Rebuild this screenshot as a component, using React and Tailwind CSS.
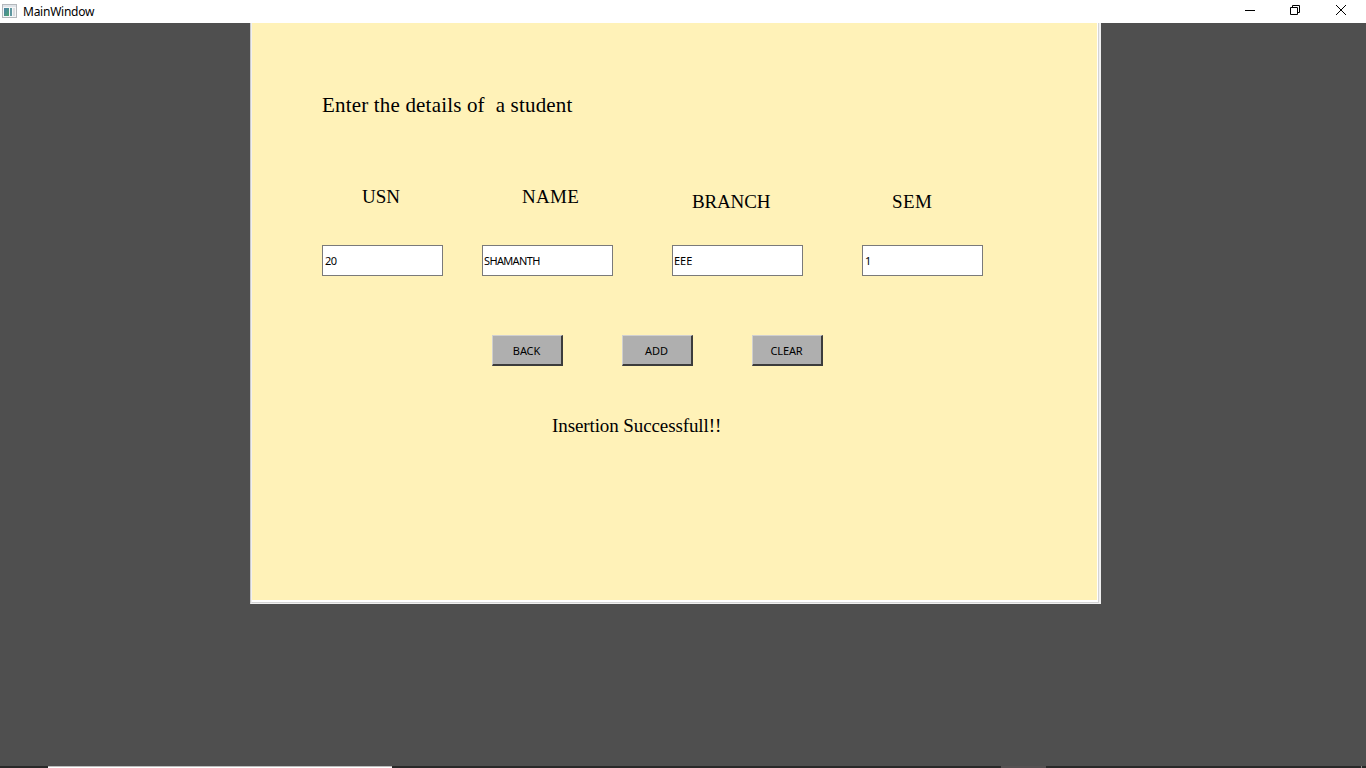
import React from "react";

const serif = "font-['Liberation_Serif',serif] text-black whitespace-pre";
const field =
  "h-[31px] border border-[#7a7a7a] bg-white text-[11px] leading-[29px] text-black outline-none font-['Noto_Sans',sans-serif]";
const button =
  "h-[31px] w-[71px] border-t border-l border-r-2 border-b-2 border-t-[#d0d0d0] border-l-[#d0d0d0] border-r-[#3c3c3c] border-b-[#3c3c3c] bg-[#afafaf] pr-px text-center text-[11px] leading-[29px] tracking-[-0.1px] text-black font-['Noto_Sans',sans-serif]";

function TitleBar() {
  return (
    <header className="flex h-[23px] shrink-0 items-center bg-white">
      <svg className="mb-px ml-[2px] shrink-0" width="16" height="14" viewBox="0 0 16 14" shapeRendering="crispEdges">
        <defs>
          <linearGradient id="pane" x1="0" y1="0" x2="1" y2="1">
            <stop offset="0" stopColor="#4a7fa8" />
            <stop offset="1" stopColor="#4fa572" />
          </linearGradient>
        </defs>
        <rect width="15" height="14" fill="#b4b8bc" />
        <rect x="1" y="1" width="13" height="2" fill="#dfe3e8" />
        <rect x="1" y="3" width="13" height="10" fill="#f5f6f7" />
        <rect x="2" y="4" width="5" height="8" fill="url(#pane)" />
        <rect x="8" y="4" width="2" height="8" fill="#5f97a0" />
        <rect x="11" y="4" width="2" height="8" fill="#dadde0" />
      </svg>
      <span className="ml-[5px] pt-px font-['Noto_Sans',sans-serif] text-[12px] leading-[22px] tracking-[-0.25px] text-black">MainWindow</span>
      <svg className="ml-auto mr-[19px]" width="102" height="23" viewBox="0 0 102 23" fill="none" stroke="#000">
        <path d="M0 10.5h10" />
        <path d="M45.5 7.5h7v7h-7zM47.5 7.5v-2h7v7h-2" />
        <path d="M91 5l10 10M101 5l-10 10" />
      </svg>
    </header>
  );
}

export default function App() {
  return (
    <div className="flex h-[768px] w-[1366px] flex-col overflow-hidden bg-[#4f4f4f]">
      <TitleBar />
      <main className="flex-1">
        <div className="ml-[250px] h-[581px] w-[851px] border-r-2 border-b border-l border-[#f0f0f0] border-l-[#c8c8c8]">
          <div className="h-[580px] border-r border-b border-l border-r-[#d4d4d4] border-b-[#d4d4d4] border-l-[#f0f0f0]">
            <div className="flex h-[579px] flex-col border-r border-b-2 border-white bg-[#fff2b8] pl-[70px]">
              <h1 className={`mt-[68px] h-[28px] text-[21px] leading-[28px] tracking-[0.18px] ${serif}`}>{"Enter the details of  a student"}</h1>
              <div className="mt-[61px] flex h-[45px] pl-[40px]">
                <span className={`w-[160px] pt-[5px] text-[19px] leading-[24px] ${serif}`}>USN</span>
                <span className={`w-[170px] pt-[5px] text-[19px] leading-[24px] tracking-[0.3px] ${serif}`}>NAME</span>
                <span className={`w-[200px] pt-[10px] text-[19px] leading-[24px] tracking-[-0.15px] ${serif}`}>BRANCH</span>
                <span className={`pt-[10px] text-[19px] leading-[24px] tracking-[0.4px] ${serif}`}>SEM</span>
              </div>
              <div className="mt-[20px] flex">
                <input className={`mr-[39px] w-[121px] pl-[2px] tracking-[-0.5px] ${field}`} defaultValue="20" />
                <input className={`mr-[59px] w-[131px] pl-px tracking-[-0.65px] ${field}`} defaultValue="SHAMANTH" />
                <input className={`mr-[59px] w-[131px] pl-px ${field}`} defaultValue="EEE" />
                <input className={`w-[121px] pl-[2px] ${field}`} defaultValue="1" />
              </div>
              <div className="mt-[59px] flex gap-[59px] pl-[170px]">
                <button className={button}>BACK</button>
                <button className={button}>ADD</button>
                <button className={button}>CLEAR</button>
              </div>
              <p className={`mt-[48px] pl-[230px] text-[19px] leading-[24px] tracking-[-0.1px] ${serif}`}>Insertion Successfull!!</p>
            </div>
          </div>
        </div>
      </main>
      <footer className="flex h-[2px] shrink-0 bg-[#292929]">
        <div className="ml-[48px] w-[344px] border-t border-[#bdbdbd] bg-white" />
        <div className="ml-[609px] w-[45px] bg-[#555152]" />
        <div className="ml-[315px] w-px bg-[#8a8a8a]" />
      </footer>
    </div>
  );
}
